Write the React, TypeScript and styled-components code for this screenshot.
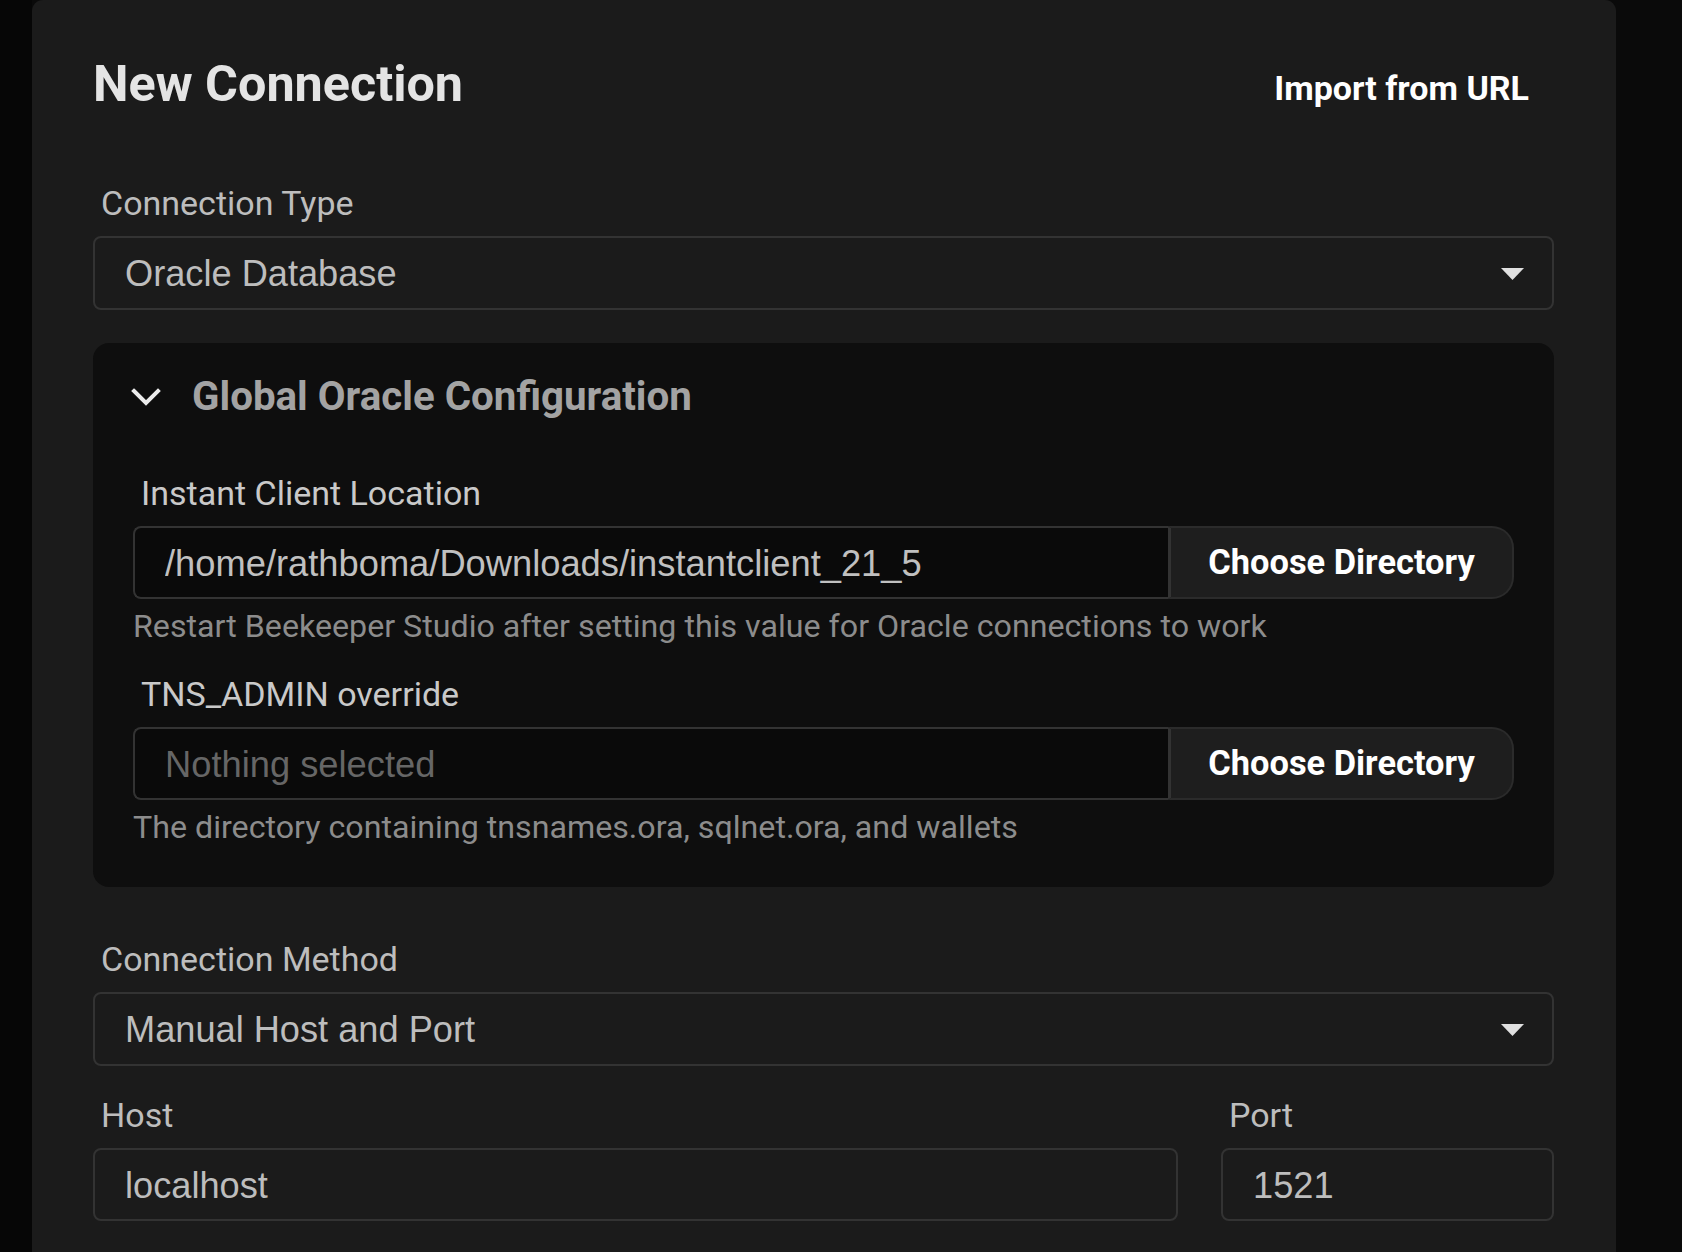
import React from "react";
import styled, { createGlobalStyle } from "styled-components";

const Global = createGlobalStyle`
  html, body { margin: 0; padding: 0; background: #0a0a0a; }
  body { font-family: Roboto, "Noto Sans", sans-serif; overflow: hidden; }
  * { box-sizing: border-box; }
`;

const Page = styled.div`
  display: grid;
  grid-template-columns: 32px 1584px 1fr;
  min-height: 1252px;
  background: #0a0a0a;
`;

const LeftGutter = styled.div`
  background: #060606;
`;

const Card = styled.main`
  background: #1b1b1b;
  border-radius: 11px 11px 0 0;
  padding: 54px 62px 0 61px;
`;

const Header = styled.header`
  display: flex;
  justify-content: space-between;
  align-items: flex-start;
`;

const Title = styled.h1`
  margin: 0;
  font-family: Roboto, sans-serif;
  font-weight: 700;
  font-size: 50.3px;
  line-height: 60px;
  color: #e4e4e4;
`;

const LinkButton = styled.button`
  background: none;
  border: none;
  padding: 14px 25px 0;
  font-family: Roboto, sans-serif;
  font-weight: 700;
  font-size: 34px;
  line-height: 40px;
  color: #ffffff;
  cursor: pointer;
`;

const Label = styled.label<{ $top: number; $inner?: boolean }>`
  display: block;
  margin: ${(p) => p.$top}px 0 13px;
  padding-left: 8px;
  font-family: Roboto, sans-serif;
  font-size: 34px;
  line-height: 40px;
  color: ${(p) => (p.$inner ? "#c9c9c9" : "#bdbdbd")};
`;

const SelectBox = styled.div`
  position: relative;
  display: flex;
  align-items: center;
  height: 74px;
  padding: 2px 30px 0;
  border: 2px solid #333333;
  border-radius: 8px;
  background: #1b1b1b;
  font-family: "Liberation Sans", Arial, sans-serif;
  font-size: 36.2px;
  color: #bdbdbd;
`;

const SelectText = styled.span`
  flex: 1;
`;

const Caret = styled.svg`
  width: 23px;
  height: 12px;
  margin-right: -2px;
`;

const Panel = styled.section`
  margin-top: 33px;
  background: #0e0e0e;
  border-radius: 16px;
  padding: 30px 40px 41px;
`;

const PanelHeader = styled.div`
  display: flex;
  align-items: center;
  gap: 31px;
  margin-left: -2px;
`;

const PanelTitle = styled.h2`
  margin: 0;
  font-family: Roboto, sans-serif;
  font-weight: 700;
  font-size: 40.3px;
  line-height: 48px;
  color: #a3a3a3;
`;

const InputGroup = styled.div`
  display: flex;
  height: 73px;
`;

const GroupInput = styled.input`
  flex: 1;
  min-width: 0;
  height: 100%;
  padding: 2px 30px 0;
  background: #0a0a0a;
  border: 2px solid #333333;
  border-right: none;
  border-radius: 8px 0 0 8px;
  font-family: "Liberation Sans", Arial, sans-serif;
  font-size: 36.3px;
  color: #c0c0c0;
  outline: none;
  &::placeholder { color: #666666; }
`;

const DirButton = styled.button`
  width: 346px;
  height: 100%;
  background: #1e1e1e;
  border: 2px solid #2b2b2b;
  border-left: 3px solid #333333;
  border-radius: 0 22px 22px 0;
  font-family: Roboto, sans-serif;
  font-weight: 700;
  font-size: 34.4px;
  color: #ffffff;
  padding: 0 0 2px;
  cursor: pointer;
`;

const Help = styled.p`
  margin: 8px 0 0;
  font-family: Roboto, sans-serif;
  font-size: 32.2px;
  line-height: 38px;
  color: #8c8c8c;
`;

const Row = styled.div`
  display: flex;
  gap: 43px;
`;

const Field = styled.div<{ $width?: number }>`
  flex: ${(p) => (p.$width ? `0 0 ${p.$width}px` : "1")};
  min-width: 0;
`;

const TextInput = styled.input`
  width: 100%;
  height: 73px;
  padding: 2px 30px 0;
  background: #1b1b1b;
  border: 2px solid #333333;
  border-radius: 8px;
  font-family: "Liberation Sans", Arial, sans-serif;
  font-size: 36.2px;
  color: #bdbdbd;
  outline: none;
`;

const Chevron = () => (
  <svg width="30" height="20" viewBox="0 0 30 20">
    <path d="M3 4 L15 16 L27 4" fill="none" stroke="#ececec" strokeWidth="4" strokeLinecap="square" strokeLinejoin="miter" />
  </svg>
);

const Select = ({ value }: { value: string }) => (
  <SelectBox>
    <SelectText>{value}</SelectText>
    <Caret viewBox="0 0 23 12">
      <polygon points="0,0 23,0 11.5,12" fill="#e0e0e0" />
    </Caret>
  </SelectBox>
);

export default function App() {
  return (
    <>
      <Global />
      <Page>
        <LeftGutter />
        <Card>
          <Header>
            <Title>New Connection</Title>
            <LinkButton>Import from URL</LinkButton>
          </Header>

          <Label $top={69}>Connection Type</Label>
          <Select value="Oracle Database" />

          <Panel>
            <PanelHeader>
              <Chevron />
              <PanelTitle>Global Oracle Configuration</PanelTitle>
            </PanelHeader>

            <Label $top={52} $inner>Instant Client Location</Label>
            <InputGroup>
              <GroupInput readOnly value="/home/rathboma/Downloads/instantclient_21_5" />
              <DirButton>Choose Directory</DirButton>
            </InputGroup>
            <Help>Restart Beekeeper Studio after setting this value for Oracle connections to work</Help>

            <Label $top={29} $inner>TNS_ADMIN override</Label>
            <InputGroup>
              <GroupInput readOnly placeholder="Nothing selected" value="" />
              <DirButton>Choose Directory</DirButton>
            </InputGroup>
            <Help>The directory containing tnsnames.ora, sqlnet.ora, and wallets</Help>
          </Panel>

          <Label $top={52}>Connection Method</Label>
          <Select value="Manual Host and Port" />

          <Row>
            <Field>
              <Label $top={29}>Host</Label>
              <TextInput readOnly value="localhost" />
            </Field>
            <Field $width={333}>
              <Label $top={29}>Port</Label>
              <TextInput readOnly value="1521" />
            </Field>
          </Row>
        </Card>
      </Page>
    </>
  );
}
